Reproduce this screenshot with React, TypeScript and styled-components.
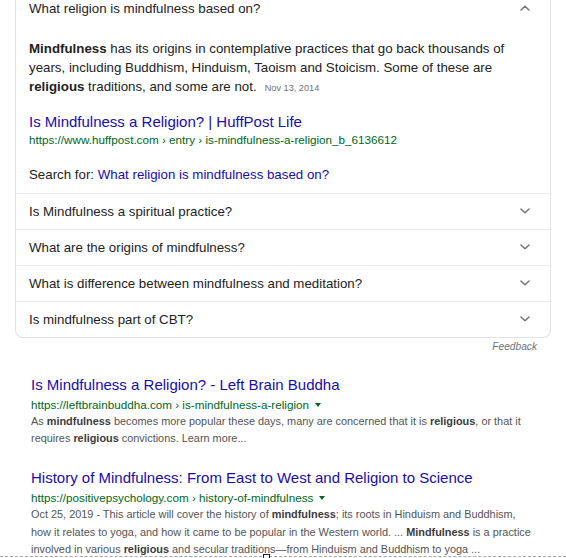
import styled, { createGlobalStyle } from 'styled-components';

const GlobalStyle = createGlobalStyle`
  html, body {
    margin: 0;
    padding: 0;
    background: #fff;
  }
  body {
    font-family: 'Liberation Sans', Arial, Helvetica, sans-serif;
    color: #222;
    overflow: hidden;
  }
`;

const Page = styled.div`
  position: relative;
  width: 566px;
  height: 558px;
  overflow: hidden;
`;

const Card = styled.div`
  margin: -10px 15px 0 15px;
  border: 1px solid #dfe1e5;
  border-top: none;
  border-radius: 0 0 8px 8px;
`;

const QuestionRow = styled.div<{ $divider?: boolean }>`
  box-sizing: border-box;
  height: 36px;
  display: flex;
  align-items: center;
  justify-content: space-between;
  padding: 0 20px 0 13px;
  border-top: ${(p) => (p.$divider ? '1px solid #e8eaed' : 'none')};
  font-size: 13.3px;
  color: #222;
`;

const Chevron = ({ up }: { up?: boolean }) => (
  <svg width="10" height="6" viewBox="0 0 10 6" fill="none">
    <path
      d={up ? 'M1 5 L5 1.2 L9 5' : 'M1 1 L5 4.8 L9 1'}
      stroke="#70757a"
      strokeWidth="1.5"
      strokeLinecap="round"
      strokeLinejoin="round"
    />
  </svg>
);

const Answer = styled.div`
  padding: 12.5px 13px 8.5px 13px;
`;

const AnswerText = styled.p`
  margin: 0;
  font-size: 13.3px;
  line-height: 19px;
  color: #222;
  white-space: nowrap;

  b {
    font-weight: 700;
  }
`;

const AnswerDate = styled.span`
  margin-left: 8px;
  font-size: 9.2px;
  color: #70757a;
`;

const SourceTitle = styled.a`
  display: block;
  margin-top: 14.5px;
  font-size: 15px;
  line-height: 20px;
  color: #1a0dab;
  text-decoration: none;
`;

const GreenUrl = styled.div<{ $gap?: number }>`
  display: flex;
  align-items: center;
  margin-top: ${(p) => p.$gap ?? 0}px;
  font-size: 11.7px;
  line-height: 16px;
  color: #006621;
  white-space: nowrap;
`;

const Caret = styled.span`
  display: inline-block;
  margin-left: 6px;
  border-left: 3px solid transparent;
  border-right: 3px solid transparent;
  border-top: 4px solid #006621;
`;

const SearchFor = styled.div`
  margin-top: 17px;
  font-size: 13.3px;
  line-height: 19px;
  color: #222;

  a {
    color: #1a0dab;
    text-decoration: none;
  }
`;

const Feedback = styled.div`
  margin-top: 2px;
  padding-right: 29px;
  text-align: right;
  font-size: 10.2px;
  line-height: 14px;
  font-style: italic;
  color: #70757a;
`;

const Results = styled.div`
  display: flex;
  flex-direction: column;
  gap: 20.6px;
  padding: 21px 0 0 31px;
`;

const Result = styled.div`
  display: flex;
  flex-direction: column;
`;

const ResultTitle = styled.a`
  font-size: 15px;
  line-height: 20px;
  color: #1a0dab;
  text-decoration: none;
  white-space: nowrap;
`;

const Snippet = styled.div`
  font-size: 10.9px;
  line-height: 17.6px;
  color: #545454;
  white-space: nowrap;

  b {
    color: #3c3c3c;
    font-weight: 700;
  }
`;

const SelectionEdge = styled.div`
  position: absolute;
  left: 0;
  right: 0;
  top: 556px;
  border-top: 1px dashed #a8a8a8;
`;

const Handle = styled.div`
  position: absolute;
  left: 263px;
  top: -3px;
  width: 5px;
  height: 5px;
  border: 1px solid #222;
  background: #fff;
`;

const questions = [
  'Is Mindfulness a spiritual practice?',
  'What are the origins of mindfulness?',
  'What is difference between mindfulness and meditation?',
  'Is mindfulness part of CBT?',
];

export default function App() {
  return (
    <Page>
      <GlobalStyle />
      <Card>
        <QuestionRow>
          <span>What religion is mindfulness based on?</span>
          <Chevron up />
        </QuestionRow>
        <Answer>
          <AnswerText>
            <b>Mindfulness</b> has its origins in contemplative practices that go back thousands of
            <br />
            years, including Buddhism, Hinduism, Taoism and Stoicism. Some of these are
            <br />
            <b>religious</b> traditions, and some are not.
            <AnswerDate>Nov 13, 2014</AnswerDate>
          </AnswerText>
          <SourceTitle>Is Mindfulness a Religion? | HuffPost Life</SourceTitle>
          <GreenUrl>https://www.huffpost.com › entry › is-mindfulness-a-religion_b_6136612</GreenUrl>
          <SearchFor>
            Search for: <a>What religion is mindfulness based on?</a>
          </SearchFor>
        </Answer>
        {questions.map((q) => (
          <QuestionRow key={q} $divider>
            <span>{q}</span>
            <Chevron />
          </QuestionRow>
        ))}
      </Card>
      <Feedback>Feedback</Feedback>

      <Results>
        <Result>
          <ResultTitle>Is Mindfulness a Religion? - Left Brain Buddha</ResultTitle>
          <GreenUrl $gap={2}>
            https://leftbrainbuddha.com › is-mindfulness-a-religion
            <Caret />
          </GreenUrl>
          <Snippet>
            As <b>mindfulness</b> becomes more popular these days, many are concerned that it is{' '}
            <b>religious</b>, or that it
            <br />
            requires <b>religious</b> convictions. Learn more...
          </Snippet>
        </Result>
        <Result>
          <ResultTitle>History of Mindfulness: From East to West and Religion to Science</ResultTitle>
          <GreenUrl $gap={2}>
            https://positivepsychology.com › history-of-mindfulness
            <Caret />
          </GreenUrl>
          <Snippet>
            Oct 25, 2019 - This article will cover the history of <b>mindfulness</b>; its roots in Hinduism
            and Buddhism,
            <br />
            how it relates to yoga, and how it came to be popular in the Western world. ...{' '}
            <b>Mindfulness</b> is a practice
            <br />
            involved in various <b>religious</b> and secular traditions—from Hinduism and Buddhism to
            yoga ...
          </Snippet>
        </Result>
      </Results>

      <SelectionEdge>
        <Handle />
      </SelectionEdge>
    </Page>
  );
}
